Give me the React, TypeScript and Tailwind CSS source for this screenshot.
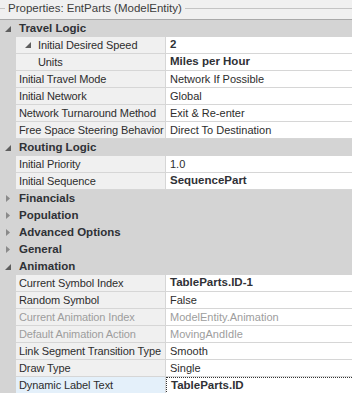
type Row =
  | { kind: "cat"; label: string; open: boolean }
  | {
      kind: "prop";
      label: string;
      value: string;
      bold?: boolean;
      level?: number;
      expander?: boolean;
      disabled?: boolean;
      selected?: boolean;
    };

const ROWS: Row[] = [
  { kind: "cat", label: "Travel Logic", open: true },
  { kind: "prop", label: "Initial Desired Speed", value: "2", bold: true, level: 1, expander: true },
  { kind: "prop", label: "Units", value: "Miles per Hour", bold: true, level: 1 },
  { kind: "prop", label: "Initial Travel Mode", value: "Network If Possible" },
  { kind: "prop", label: "Initial Network", value: "Global" },
  { kind: "prop", label: "Network Turnaround Method", value: "Exit & Re-enter" },
  { kind: "prop", label: "Free Space Steering Behavior", value: "Direct To Destination" },
  { kind: "cat", label: "Routing Logic", open: true },
  { kind: "prop", label: "Initial Priority", value: "1.0" },
  { kind: "prop", label: "Initial Sequence", value: "SequencePart", bold: true },
  { kind: "cat", label: "Financials", open: false },
  { kind: "cat", label: "Population", open: false },
  { kind: "cat", label: "Advanced Options", open: false },
  { kind: "cat", label: "General", open: false },
  { kind: "cat", label: "Animation", open: true },
  { kind: "prop", label: "Current Symbol Index", value: "TableParts.ID-1", bold: true },
  { kind: "prop", label: "Random Symbol", value: "False" },
  { kind: "prop", label: "Current Animation Index", value: "ModelEntity.Animation", disabled: true },
  { kind: "prop", label: "Default Animation Action", value: "MovingAndIdle", disabled: true },
  { kind: "prop", label: "Link Segment Transition Type", value: "Smooth" },
  { kind: "prop", label: "Draw Type", value: "Single" },
  { kind: "prop", label: "Dynamic Label Text", value: "TableParts.ID", bold: true, selected: true },
];

function Expanded() {
  return (
    <svg width="6" height="6" viewBox="0 0 6 6" className="shrink-0">
      <path d="M6 0 L6 6 L0 6 Z" fill="#5e5e5e" />
    </svg>
  );
}

function Collapsed() {
  return (
    <svg width="4" height="7" viewBox="0 0 4 7" className="shrink-0">
      <path d="M0 0 L4 3.5 L0 7 Z" fill="#8a8a8a" />
    </svg>
  );
}

export default function App() {
  return (
    <div
      className="w-[352px] h-[393px] overflow-hidden bg-[#f0f0f0] text-[11px] text-[#2d2d2d] whitespace-nowrap"
      style={{ fontFamily: '"Liberation Sans", Arial, sans-serif' }}
    >
      {/* title */}
      <div className="h-[20px] flex items-center border-b border-[#a9a9a9]">
        <div className="w-[5px] h-px bg-[#c4c4c4] mb-[3px]" />
        <span className="px-[3px] text-[11.5px] text-[#3d3d3d] leading-none mb-[2px]">
          Properties: EntParts (ModelEntity)
        </span>
        <div className="flex-1 h-px bg-[#c4c4c4] mb-[3px]" />
      </div>

      {ROWS.map((r, i) => {
        if (r.kind === "cat") {
          return (
            <div key={i} className="h-[17px] flex items-center bg-[#d4d4d4]">
              <div className="w-[19px] flex items-center justify-center pr-[3px]">
                {r.open ? <Expanded /> : <Collapsed />}
              </div>
              <span className="font-bold text-[11.5px] text-[#2f3136]">{r.label}</span>
            </div>
          );
        }
        return (
          <div key={i} className="h-[17px] flex bg-[#d4d4d4]">
            <div className="w-[16px] shrink-0" />
            <div
              className={`w-[150px] shrink-0 flex items-center overflow-hidden border-b border-r border-[#d6d6d6] ${
                r.selected ? "bg-[#e4f0fa]" : "bg-[#f0f0f0]"
              } ${r.level ? "pl-[8px]" : "pl-[3px]"}`}
            >
              {r.level ? (
                <div className="w-[14px] shrink-0 flex items-center pl-[1px]">
                  {r.expander ? <Expanded /> : null}
                </div>
              ) : null}
              <span
                className={`tracking-[-0.1px] ${r.disabled ? "text-[#9d9d9d]" : "text-[#2d2d2d]"}`}
              >
                {r.label}
              </span>
            </div>
            <div
              className={`flex-1 flex items-center pl-[4px] bg-white ${
                r.selected
                  ? "border-t border-l border-dotted border-[#333]"
                  : "border-b border-[#d6d6d6]"
              }`}
            >
              <span
                className={
                  r.bold
                    ? "font-bold text-[11.5px] text-[#2f3136]"
                    : r.disabled
                    ? "text-[#9d9d9d]"
                    : "text-[#2d2d2d]"
                }
              >
                {r.value}
              </span>
            </div>
          </div>
        );
      })}
    </div>
  );
}
